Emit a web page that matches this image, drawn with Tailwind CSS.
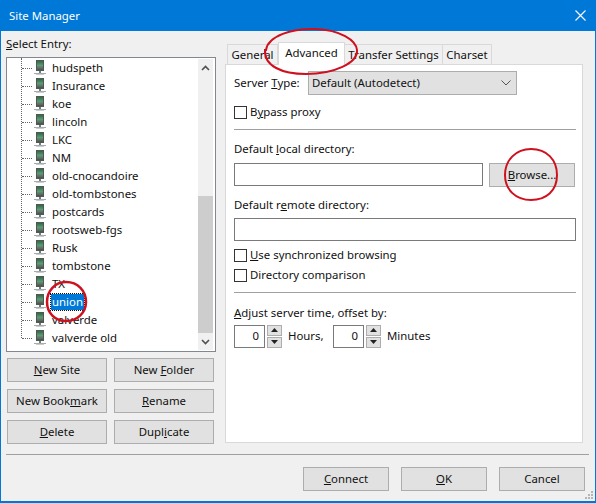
<!DOCTYPE html>
<html lang="en">
<head>
    <meta charset="UTF-8">
    <meta name="viewport" content="width=device-width, initial-scale=1.0">
    <title>Site Manager</title>
    <script src="https://cdn.jsdelivr.net/npm/@tailwindcss/browser@4"></script>
</head>
<body class="bg-[#f0f0f0]">
    <svg class="absolute w-0 h-0">
        <defs>
            <linearGradient id="srvg" x1="0" y1="0" x2="0" y2="1">
                <stop offset="0" stop-color="#2c6a45"/>
                <stop offset="0.55" stop-color="#5f9a78"/>
                <stop offset="1" stop-color="#59625e"/>
            </linearGradient>
        </defs>
        <symbol id="srv" viewBox="0 0 14 16">
            <rect x="3" y="0" width="8" height="11" fill="#50584f"/>
            <rect x="4" y="1" width="6" height="8" fill="url(#srvg)"/>
            <rect x="6" y="11" width="2" height="3" fill="#6f7d7d"/>
            <rect x="1" y="13" width="12" height="1" fill="#a3acae"/>
            <rect x="3" y="14" width="8" height="1" fill="#c8cdd0"/>
        </symbol>
    </svg>

    <div class="relative w-[596px] h-[503px] overflow-hidden flex flex-col bg-[#f0f0f0] border-x border-b-2 border-[#0078d7] font-['Noto_Sans',sans-serif] text-[11.4px] leading-[16px] text-[#111]">
        <!-- title bar -->
        <div class="h-[31px] -mx-px shrink-0 bg-[#0078d7] text-white flex items-center justify-between pl-[9px] pr-[10px] text-[11.4px]">
            <span>Site Manager</span>
            <svg width="11" height="11" viewBox="0 0 11 11" stroke="#fff" stroke-width="1.1"><path d="M.5.5l10 10M10.5.5l-10 10"/></svg>
        </div>

        <div class="flex h-[422px] shrink-0">
            <!-- left column -->
            <div class="w-[224px] shrink-0 pl-[5px] pt-[5px]">
                <div class="h-[21px]"><span class="underline">S</span>elect Entry:</div>
                <div class="w-[210px] h-[295px] border border-[#828790] bg-white flex">
                    <div class="relative w-[191px] h-full pt-px">
                        <div class="absolute left-[14px] top-0 h-[280px] border-l border-dotted border-[#666]"></div>
                        <div class="h-[18px] flex items-center pl-[15px]"><span class="w-[10px] border-t border-dotted border-[#666]"></span><svg class="w-[14px] h-[16px] ml-[1px]"><use href="#srv"/></svg><span class="ml-[5px]">hudspeth</span></div>
                        <div class="h-[18px] flex items-center pl-[15px]"><span class="w-[10px] border-t border-dotted border-[#666]"></span><svg class="w-[14px] h-[16px] ml-[1px]"><use href="#srv"/></svg><span class="ml-[5px]">Insurance</span></div>
                        <div class="h-[18px] flex items-center pl-[15px]"><span class="w-[10px] border-t border-dotted border-[#666]"></span><svg class="w-[14px] h-[16px] ml-[1px]"><use href="#srv"/></svg><span class="ml-[5px]">koe</span></div>
                        <div class="h-[18px] flex items-center pl-[15px]"><span class="w-[10px] border-t border-dotted border-[#666]"></span><svg class="w-[14px] h-[16px] ml-[1px]"><use href="#srv"/></svg><span class="ml-[5px]">lincoln</span></div>
                        <div class="h-[18px] flex items-center pl-[15px]"><span class="w-[10px] border-t border-dotted border-[#666]"></span><svg class="w-[14px] h-[16px] ml-[1px]"><use href="#srv"/></svg><span class="ml-[5px]">LKC</span></div>
                        <div class="h-[18px] flex items-center pl-[15px]"><span class="w-[10px] border-t border-dotted border-[#666]"></span><svg class="w-[14px] h-[16px] ml-[1px]"><use href="#srv"/></svg><span class="ml-[5px]">NM</span></div>
                        <div class="h-[18px] flex items-center pl-[15px]"><span class="w-[10px] border-t border-dotted border-[#666]"></span><svg class="w-[14px] h-[16px] ml-[1px]"><use href="#srv"/></svg><span class="ml-[5px]">old-cnocandoire</span></div>
                        <div class="h-[18px] flex items-center pl-[15px]"><span class="w-[10px] border-t border-dotted border-[#666]"></span><svg class="w-[14px] h-[16px] ml-[1px]"><use href="#srv"/></svg><span class="ml-[5px]">old-tombstones</span></div>
                        <div class="h-[18px] flex items-center pl-[15px]"><span class="w-[10px] border-t border-dotted border-[#666]"></span><svg class="w-[14px] h-[16px] ml-[1px]"><use href="#srv"/></svg><span class="ml-[5px]">postcards</span></div>
                        <div class="h-[18px] flex items-center pl-[15px]"><span class="w-[10px] border-t border-dotted border-[#666]"></span><svg class="w-[14px] h-[16px] ml-[1px]"><use href="#srv"/></svg><span class="ml-[5px]">rootsweb-fgs</span></div>
                        <div class="h-[18px] flex items-center pl-[15px]"><span class="w-[10px] border-t border-dotted border-[#666]"></span><svg class="w-[14px] h-[16px] ml-[1px]"><use href="#srv"/></svg><span class="ml-[5px]">Rusk</span></div>
                        <div class="h-[18px] flex items-center pl-[15px]"><span class="w-[10px] border-t border-dotted border-[#666]"></span><svg class="w-[14px] h-[16px] ml-[1px]"><use href="#srv"/></svg><span class="ml-[5px]">tombstone</span></div>
                        <div class="h-[18px] flex items-center pl-[15px]"><span class="w-[10px] border-t border-dotted border-[#666]"></span><svg class="w-[14px] h-[16px] ml-[1px]"><use href="#srv"/></svg><span class="ml-[5px]">TX</span></div>
                        <div class="h-[18px] flex items-center pl-[15px]"><span class="w-[10px] border-t border-dotted border-[#666]"></span><svg class="w-[14px] h-[16px] ml-[1px]"><use href="#srv"/></svg><span class="ml-[4px] px-px bg-[#0078d7] text-white outline-1 outline-dotted outline-[#111]">union</span></div>
                        <div class="h-[18px] flex items-center pl-[15px]"><span class="w-[10px] border-t border-dotted border-[#666]"></span><svg class="w-[14px] h-[16px] ml-[1px]"><use href="#srv"/></svg><span class="ml-[5px]">valverde</span></div>
                        <div class="h-[18px] flex items-center pl-[15px]"><span class="w-[10px] border-t border-dotted border-[#666]"></span><svg class="w-[14px] h-[16px] ml-[1px]"><use href="#srv"/></svg><span class="ml-[5px]">valverde old</span></div>
                    </div>
                    <!-- scrollbar -->
                    <div class="w-[15px] h-[291px] mt-px bg-[#f0f0f0] flex flex-col">
                        <div class="h-[17px] flex items-center justify-center"><svg width="9" height="6" viewBox="0 0 9 6" fill="none" stroke="#505050" stroke-width="1.6"><path d="M1 5l3.500-3.500L8 5"/></svg></div>
                        <div class="flex-1"></div>
                        <div class="h-[137px] bg-[#cdcdcd]"></div>
                        <div class="h-[17px] flex items-center justify-center"><svg width="9" height="6" viewBox="0 0 9 6" fill="none" stroke="#505050" stroke-width="1.6"><path d="M1 1l3.500 3.500L8 1"/></svg></div>
                    </div>
                </div>
                <div class="grid grid-cols-[100px_100px] gap-x-[7px] gap-y-[7px] mt-[6px] ml-px">
                    <button class="h-[24px] bg-[#e1e1e1] border border-[#adadad]"><span class="underline">N</span>ew Site</button>
                    <button class="h-[24px] bg-[#e1e1e1] border border-[#adadad]">New <span class="underline">F</span>older</button>
                    <button class="h-[24px] bg-[#e1e1e1] border border-[#adadad]">New Book<span class="underline">m</span>ark</button>
                    <button class="h-[24px] bg-[#e1e1e1] border border-[#adadad]"><span class="underline">R</span>ename</button>
                    <button class="h-[24px] bg-[#e1e1e1] border border-[#adadad]"><span class="underline">D</span>elete</button>
                    <button class="h-[24px] bg-[#e1e1e1] border border-[#adadad]">Dupl<span class="underline">i</span>cate</button>
                </div>
            </div>

            <!-- right column -->
            <div class="w-[358px] shrink-0 pt-[11px]">
                <div class="flex h-[22px] pl-[2px] items-end">
                    <div class="h-[20px] w-[51px] flex items-center justify-center bg-[#f0f0f0] border border-b-0 border-[#d9d9d9]">General</div>
                    <div class="h-[23px] w-[67px] -mb-px relative z-10 flex items-center justify-center bg-white border border-b-0 border-[#d9d9d9] pb-[3px]">Advanced</div>
                    <div class="h-[20px] w-[98px] flex items-center justify-center bg-[#f0f0f0] border border-l-0 border-b-0 border-[#d9d9d9]">Transfer Settings</div>
                    <div class="h-[20px] w-[49px] flex items-center justify-center bg-[#f0f0f0] border border-l-0 border-b-0 border-[#d9d9d9]">Charset</div>
                </div>
                <div class="w-[358px] h-[379px] bg-white border border-[#d9d9d9] pl-[8px] pr-[6px] pt-[6px]">
                    <div class="flex items-center h-[24px]">
                        <span class="w-[74px]">Server <span class="underline">T</span>ype:</span>
                        <div class="w-[209px] h-[24px] bg-[#e1e1e1] border border-[#adadad] flex items-center justify-between pl-[3px] pr-[5px]">
                            <span>Default (Autodetect)</span>
                            <svg width="10" height="6" viewBox="0 0 10 6" fill="none" stroke="#555" stroke-width="1"><path d="M.5.5L5 5 9.500.5"/></svg>
                        </div>
                    </div>
                    <label class="flex items-center h-[14px] mt-[10px]"><span class="w-[13px] h-[13px] border border-[#333] bg-white mr-[3px]"></span>B<span class="underline">y</span>pass proxy</label>
                    <div class="h-px bg-[#a0a0a0] mt-[10px]"></div>

                    <div class="mt-[11px] h-[16px]">Default <span class="underline">l</span>ocal directory:</div>
                    <div class="flex mt-[6px] h-[24px]">
                        <div class="w-[249px] h-[23px] bg-white border border-[#7a7a7a]"></div>
                        <button class="w-[86px] h-[24px] ml-[6px] bg-[#e1e1e1] border border-[#adadad]"><span class="underline">B</span>rowse...</button>
                    </div>
                    <div class="mt-[10px] h-[16px]">Default r<span class="underline">e</span>mote directory:</div>
                    <div class="w-[342px] h-[23px] mt-[5px] bg-white border border-[#7a7a7a]"></div>
                    <label class="flex items-center h-[14px] mt-[7px]"><span class="w-[13px] h-[13px] border border-[#333] bg-white mr-[3px]"></span><span><span class="underline">U</span>se synchronized browsing</span></label>
                    <label class="flex items-center h-[14px] mt-[6px]"><span class="w-[13px] h-[13px] border border-[#333] bg-white mr-[3px]"></span>Directory comparison</label>
                    <div class="h-px bg-[#a0a0a0] mt-[10px]"></div>

                    <div class="mt-[12px] h-[16px]"><span class="underline">A</span>djust server time, offset by:</div>
                    <div class="flex items-center mt-[3px] h-[24px]">
                        <div class="w-[31px] h-[23px] border border-[#7a7a7a] bg-white flex items-center justify-end pr-[5px]">0</div>
                        <div class="w-[15px] h-[23px] ml-[2px] flex flex-col gap-px">
                            <div class="flex-1 bg-[#e1e1e1] border border-[#adadad] flex items-center justify-center"><svg width="7" height="4" viewBox="0 0 7 4" fill="#222"><path d="M3.500 0L7 4H0z"/></svg></div>
                            <div class="flex-1 bg-[#e1e1e1] border border-[#adadad] flex items-center justify-center"><svg width="7" height="4" viewBox="0 0 7 4" fill="#222"><path d="M0 0h7L3.500 4z"/></svg></div>
                        </div>
                        <span class="ml-[6px] w-[45px]">Hours,</span>
                        <div class="w-[31px] h-[23px] border border-[#7a7a7a] bg-white flex items-center justify-end pr-[5px]">0</div>
                        <div class="w-[15px] h-[23px] ml-[2px] flex flex-col gap-px">
                            <div class="flex-1 bg-[#e1e1e1] border border-[#adadad] flex items-center justify-center"><svg width="7" height="4" viewBox="0 0 7 4" fill="#222"><path d="M3.500 0L7 4H0z"/></svg></div>
                            <div class="flex-1 bg-[#e1e1e1] border border-[#adadad] flex items-center justify-center"><svg width="7" height="4" viewBox="0 0 7 4" fill="#222"><path d="M0 0h7L3.500 4z"/></svg></div>
                        </div>
                        <span class="ml-[6px]">Minutes</span>
                    </div>
                </div>
            </div>
        </div>

        <!-- footer -->
        <div class="h-px bg-[#a0a0a0] ml-[5px] mr-[6px] mt-px shrink-0"></div>
        <div class="flex justify-end gap-[12px] pt-[12px] pr-[10px]">
            <button class="w-[86px] h-[24px] bg-[#e1e1e1] border border-[#adadad]"><span class="underline">C</span>onnect</button>
            <button class="w-[86px] h-[24px] bg-[#e1e1e1] border border-[#adadad]"><span class="underline">O</span>K</button>
            <button class="w-[86px] h-[24px] bg-[#e1e1e1] border border-[#adadad]">Cancel</button>
        </div>
        <svg class="absolute right-[1px] bottom-[1px]" width="10" height="10" viewBox="0 0 10 10" fill="#b5b5b5"><path d="M7 1h2v2H7zM4 4h2v2H4zM7 4h2v2H7zM1 7h2v2H1zM4 7h2v2H4zM7 7h2v2H7z"/></svg>

        <!-- red hand-drawn circles over the dialog -->
        <svg class="absolute -left-px top-0 z-20 pointer-events-none" width="596" height="503" fill="none" stroke="#cf101f" stroke-width="2">
            <path d="M266 50C268 36 292 28 316 29C340 30 356 40 357 50C358 63 334 74 306 74C282 74 264 66 265 50Z"/>
            <path d="M505 175C505 160 516 149 531 149C547 149 557 160 557 175C557 191 546 200 531 200C516 200 505 190 505 175Z"/>
            <path d="M47 302C47 291 55 282 66 282C78 282 86 291 86 302C86 313 77 321 66 321C55 321 47 313 47 302Z" stroke-width="2.5"/>
        </svg>
    </div>
</body>
</html>
